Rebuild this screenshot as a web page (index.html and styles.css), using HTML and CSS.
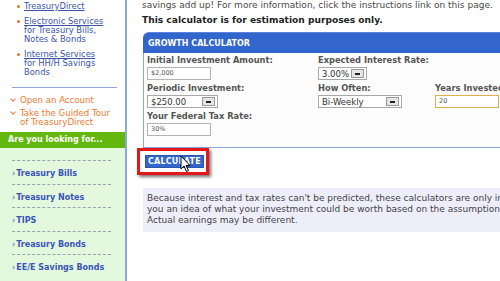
FILE: index.html
```html
<!DOCTYPE html>
<html lang="en">
<head>
    <meta charset="UTF-8">
    <meta name="viewport" content="width=device-width, initial-scale=1.0">
    <title>TreasuryDirect - Growth Calculator</title>
    <link rel="stylesheet" href="styles.css">
</head>
<body>
    <div class="page">
        <aside class="sidebar">
            <div class="side-top">
                <ul class="side-links">
                    <li><a href="#">TreasuryDirect</a></li>
                    <li><a href="#">Electronic Services</a><br>for Treasury Bills,<br>Notes &amp; Bonds</li>
                    <li><a href="#">Internet Services</a><br>for HH/H Savings<br>Bonds</li>
                </ul>
                <hr class="side-rule">
                <ul class="side-actions">
                    <li>Open an Account</li>
                    <li>Take the Guided Tour<br>of TreasuryDirect</li>
                </ul>
            </div>
            <div class="looking-head">Are you looking for...</div>
            <ul class="looking-list">
                <li>Treasury Bills</li>
                <li>Treasury Notes</li>
                <li>TIPS</li>
                <li>Treasury Bonds</li>
                <li>EE/E Savings Bonds</li>
            </ul>
        </aside>

        <main class="content">
            <p class="intro">savings add up! For more information, click the instructions link on this page.</p>
            <p class="notice">This calculator is for estimation purposes only.</p>

            <div class="calc">
                <div class="calc-head">GROWTH CALCULATOR</div>
                <div class="calc-body">
                    <div class="field">
                        <label class="field-label">Initial Investment Amount:</label>
                        <div class="text-box">$2,000</div>
                    </div>
                    <div class="field">
                        <label class="field-label">Expected Interest Rate:</label>
                        <div class="select-box w-rate"><span>3.00%</span><i class="drop"></i></div>
                    </div>
                    <div class="field"></div>

                    <div class="field">
                        <label class="field-label">Periodic Investment:</label>
                        <div class="select-box w-periodic"><span>$250.00</span><i class="drop"></i></div>
                    </div>
                    <div class="field">
                        <label class="field-label">How Often:</label>
                        <div class="select-box w-often"><span>Bi-Weekly</span><i class="drop"></i></div>
                    </div>
                    <div class="field">
                        <label class="field-label">Years Invested:</label>
                        <div class="text-box focused">20</div>
                    </div>

                    <div class="field">
                        <label class="field-label">Your Federal Tax Rate:</label>
                        <div class="text-box">30%</div>
                    </div>
                </div>
            </div>

            <div class="calc-action">
                <div class="highlight">
                    <button class="calc-btn" type="button">CALCULATE</button>
                    <svg class="cursor" width="12" height="18" viewBox="0 0 12 18">
                        <path d="M1 1 L1 14 L4 11 L6.5 16.5 L8.5 15.5 L6 10.5 L10 10.5 Z" fill="#fff" stroke="#000" stroke-width="1"/>
                    </svg>
                </div>
            </div>

            <div class="disclaimer">
                Because interest and tax rates can't be predicted, these calculators are only intended to give<br>
                you an idea of what your investment could be worth based on the assumptions you provide.<br>
                Actual earnings may be different.
            </div>
        </main>
    </div>
</body>
</html>
```

FILE: styles.css
```css
* {
    margin: 0;
    padding: 0;
    box-sizing: border-box;
}

body {
    font-family: "DejaVu Sans", Verdana, sans-serif;
    font-size: 8px;
    background: #fff;
    color: #444;
    overflow: hidden;
    width: 500px;
    height: 281px;
}

.page {
    display: flex;
    width: 680px;
    height: 281px;
}

/* left column */
.sidebar {
    width: 127px;
    flex-shrink: 0;
    border-right: 2px solid #8ea6dd;
    background: #e3f8dd;
}

.side-top {
    display: flex;
    flex-direction: column;
    background: #fff;
    padding: 2px 6px 5px 10px;
}

.side-links {
    display: flex;
    flex-direction: column;
    gap: 6px;
    list-style: none;
    padding-left: 14px;
    color: #3a55a8;
    font-size: 8.4px;
    line-height: 9px;
}

.side-links li {
    position: relative;
}

.side-links li::before {
    content: "";
    position: absolute;
    left: -7px;
    top: 3px;
    width: 3px;
    height: 3px;
    border-radius: 50%;
    background: #f07020;
}

.side-links a {
    color: #3a55a8;
    text-decoration: underline;
}

.side-rule {
    border: none;
    border-top: 1px solid #8ea6dd;
    margin: 10px 2px 8px 2px;
}

.side-actions {
    display: flex;
    flex-direction: column;
    gap: 4px;
    list-style: none;
    color: #ee7a30;
    font-size: 8.6px;
    line-height: 9px;
    padding-left: 10px;
}

.side-actions li {
    position: relative;
}

.side-actions li::before {
    content: "";
    position: absolute;
    left: -9px;
    top: 1px;
    width: 3px;
    height: 3px;
    border-right: 1.5px solid #ee7a30;
    border-bottom: 1.5px solid #ee7a30;
    transform: rotate(45deg);
}

.looking-head {
    background: #62b80c;
    color: #fff;
    font-weight: bold;
    height: 16px;
    line-height: 16px;
    padding-left: 8px;
}

.looking-list {
    list-style: none;
    margin: 12px 14px 0 12px;
}

.looking-list li {
    border-top: 1px dashed #9aa0b8;
    padding: 8px 0 4.5px 0;
    line-height: 10px;
    color: #3a55b8;
    font-weight: bold;
}

.looking-list li::before {
    content: "\203A";
    font-weight: normal;
    margin-right: 1px;
}

/* main column */
.content {
    padding-left: 15px;
    width: 550px;
}

.intro {
    font-size: 9.05px;
    line-height: 10px;
    color: #4a4a4a;
    white-space: nowrap;
}

.notice {
    font-size: 9.1px;
    font-weight: bold;
    color: #222;
    line-height: 10px;
    margin-top: 5px;
}

.calc {
    margin-top: 7px;
    margin-left: 1px;
}

.calc-head {
    background: #3366cc;
    color: #fff;
    font-weight: bold;
    height: 21px;
    line-height: 21px;
    padding-left: 5px;
    border-radius: 6px 0 0 0;
    border-top: 1px solid #5a84dc;
}

.calc-body {
    display: grid;
    grid-template-columns: 171px 117px 1fr;
    row-gap: 3px;
    border-left: 1px solid #8ea6dd;
    border-bottom: 1px solid #8ea6dd;
    padding: 2px 3px 11px 3px;
    background: #fdfdfe;
    width: 357px;
}

.field-label {
    display: block;
    font-size: 8.3px;
    font-weight: bold;
    color: #555;
    line-height: 10px;
    margin-bottom: 2px;
    white-space: nowrap;
}

.text-box {
    width: 64px;
    height: 13px;
    border: 1px solid #b3b3b3;
    background: #fff;
    font-size: 6.5px;
    line-height: 11px;
    padding-left: 3px;
    color: #555;
}

.text-box.focused {
    border-color: #e0b050;
}

.select-box {
    display: flex;
    align-items: center;
    justify-content: space-between;
    height: 13px;
    border: 1px solid #a8a8a8;
    background: #fff;
    padding: 0 2px 0 3px;
    color: #333;
    font-size: 8.5px;
}

.w-rate { width: 49px; }
.w-periodic { width: 71px; }
.w-often { width: 84px; }

.drop {
    position: relative;
    width: 13px;
    height: 9px;
    border: 1px solid #999;
    background: #e6e6e6;
}

.drop::after {
    content: "";
    position: absolute;
    left: 3px;
    top: 3px;
    width: 5px;
    height: 2px;
    background: #222;
}

.calc-action {
    display: flex;
    margin-left: -5px;
}

.highlight {
    position: relative;
    border: 3px solid #e41818;
    padding: 4px 2px 4px 5px;
    box-shadow: 2px 2px 3px rgba(0, 0, 0, 0.55);
    background: #fff;
}

.calc-btn {
    display: block;
    background: #3366cc;
    color: #fff;
    font-family: "DejaVu Sans", Verdana, sans-serif;
    font-size: 8px;
    font-weight: bold;
    border: 1px solid #2a55b0;
    height: 13px;
    line-height: 11px;
    padding: 0 2px;
    letter-spacing: 0.2px;
}

.cursor {
    position: absolute;
    left: 40px;
    top: 4px;
}

.disclaimer {
    margin-top: 13px;
    margin-left: 1px;
    background: #eeeefa;
    padding: 5px 4px 6px 4px;
    line-height: 11px;
    font-size: 9px;
    white-space: nowrap;
    color: #444;
}
```
